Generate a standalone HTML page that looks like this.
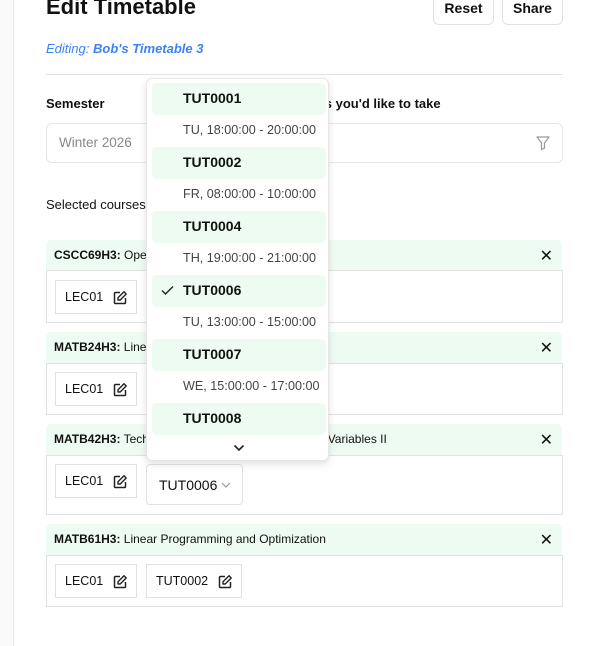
<!DOCTYPE html>
<html><head><meta charset="utf-8"><style>
*{box-sizing:border-box;margin:0;padding:0}
body{width:603px;height:646px;overflow:hidden;background:#fff;font-family:"Liberation Sans",sans-serif;color:#111;position:relative}
.a{position:absolute}
.side{left:0;top:0;width:14px;height:646px;background:#fafafa;border-right:1px solid #e5e5e5}
.btn{border:1px solid #e2e2e2;border-radius:6px;font-size:14px;font-weight:600;display:flex;align-items:center;justify-content:center;height:30px;top:-5px;padding-bottom:4px}
.hdr{left:46px;width:516px;height:31px;background:#eefbf2;border-radius:5px 5px 0 0;font-size:12px;padding:8px 8px;}
.hdr b{font-weight:700}
.x{right:9px;top:6px;font-size:16px}
.body{left:46px;width:517px;border:1px solid #e2e2e2}
.chip{border:1px solid #e2e2e2;height:34px;font-size:12.5px;display:flex;align-items:center;padding-left:9px}
.ed{position:absolute;right:8px;top:9px}
.dd{left:146px;top:78px;width:183px;height:383px;background:#fff;border:1px solid #e6e6e6;border-radius:6px;box-shadow:0 3px 8px rgba(0,0,0,.12)}
.g{left:5px;width:174px;height:32px;background:#eefbf2;border-radius:5px;font-weight:700;font-size:14px;padding:7px 0 0 31px}
.t{left:36px;font-size:12.6px;color:#444}
</style></head><body>
<div class="a side"></div>
<div class="a" style="left:46px;top:-6px;font-size:22px;font-weight:700">Edit Timetable</div>
<div class="a btn" style="left:433px;width:61px">Reset</div>
<div class="a btn" style="left:502px;width:61px">Share</div>
<div class="a" style="left:46px;top:41px;font-size:13px;font-style:italic;color:#3b82f6">Editing: <b>Bob's Timetable 3</b></div>
<div class="a" style="left:46px;top:74px;width:517px;height:1px;background:#e2e2e2"></div>
<div class="a" style="left:46px;top:96px;font-size:13px;font-weight:700">Semester</div>
<div class="a" style="left:280px;top:96px;font-size:13px;font-weight:700">Courses you'd like to take</div>
<div class="a" style="left:46px;top:123px;width:517px;height:40px;border:1px solid #e6e6e6;border-radius:6px;font-size:13.5px;color:#888;padding:11px 0 0 12px">Winter 2026</div>
<svg class="a" style="left:535px;top:135px" width="16" height="16" viewBox="0 0 16 16"><path d="M2 2h12l-4.5 6v5l-3 1.5V8z" fill="none" stroke="#999" stroke-width="1.2" stroke-linejoin="round"/></svg>
<div class="a" style="left:46px;top:197px;font-size:13px">Selected courses</div>

<div class="a hdr" style="top:240px"><b>CSCC69H3:</b> Operating Systems<span class="a x">✕</span></div>
<div class="a body" style="top:270px;height:53px"></div>
<div class="a hdr" style="top:332px"><b>MATB24H3:</b> Linear Algebra II<span class="a x">✕</span></div>
<div class="a body" style="top:363px;height:52px"></div>
<div class="a hdr" style="top:424px"><b>MATB42H3:</b> Techniques of the Calculus of Several Variables II<span class="a x">✕</span></div>
<div class="a body" style="top:455px;height:60px"></div>
<div class="a hdr" style="top:524px"><b>MATB61H3:</b> Linear Programming and Optimization<span class="a x">✕</span></div>
<div class="a body" style="top:555px;height:52px"></div>

<svg width="0" height="0" style="position:absolute"><defs><symbol id="e" viewBox="0 0 16 16"><path d="M8 2.5H3.5a1 1 0 0 0-1 1v9a1 1 0 0 0 1 1h9a1 1 0 0 0 1-1V8" fill="none" stroke="#222" stroke-width="1.5"/><path d="M12 1.8l2.2 2.2-6 6H6V7.8z" fill="none" stroke="#222" stroke-width="1.4" stroke-linejoin="round"/></symbol></defs></svg>

<div class="a chip" style="left:55px;top:280px;width:82px">LEC01<svg class="ed" width="16" height="16"><use href="#e"/></svg></div>
<div class="a chip" style="left:146px;top:280px;width:90px"></div>
<div class="a chip" style="left:55px;top:372px;width:82px">LEC01<svg class="ed" width="16" height="16"><use href="#e"/></svg></div>
<div class="a chip" style="left:146px;top:372px;width:90px"></div>
<div class="a chip" style="left:55px;top:464px;width:82px">LEC01<svg class="ed" width="16" height="16"><use href="#e"/></svg></div>
<div class="a chip" style="left:146px;top:464px;width:97px;height:41px;border-radius:4px;font-size:14px;padding-left:12px">TUT0006<svg style="margin-left:4px" width="10" height="8"><path d="M1 2l4 4 4-4" fill="none" stroke="#999" stroke-width="1.2"/></svg></div>
<div class="a chip" style="left:55px;top:564px;width:82px">LEC01<svg class="ed" width="16" height="16"><use href="#e"/></svg></div>
<div class="a chip" style="left:146px;top:564px;width:96px">TUT0002<svg class="ed" width="16" height="16"><use href="#e"/></svg></div>

<div class="a dd">
<div class="a g" style="top:4px">TUT0001</div>
<div class="a t" style="top:44px">TU, 18:00:00 - 20:00:00</div>
<div class="a g" style="top:68px">TUT0002</div>
<div class="a t" style="top:108px">FR, 08:00:00 - 10:00:00</div>
<div class="a g" style="top:132px">TUT0004</div>
<div class="a t" style="top:172px">TH, 19:00:00 - 21:00:00</div>
<div class="a g" style="top:196px">TUT0006<svg class="a" style="left:9px;top:10px" width="13" height="11"><path d="M1 5.5l3.5 3.5L12 1.5" fill="none" stroke="#222" stroke-width="1.4"/></svg></div>
<div class="a t" style="top:236px">TU, 13:00:00 - 15:00:00</div>
<div class="a g" style="top:260px">TUT0007</div>
<div class="a t" style="top:300px">WE, 15:00:00 - 17:00:00</div>
<div class="a g" style="top:324px">TUT0008</div>
<svg class="a" style="left:86px;top:365px" width="12" height="8"><path d="M1.5 1.5l4.5 4.5 4.5-4.5" fill="none" stroke="#222" stroke-width="1.6"/></svg>
</div>
</body></html>
